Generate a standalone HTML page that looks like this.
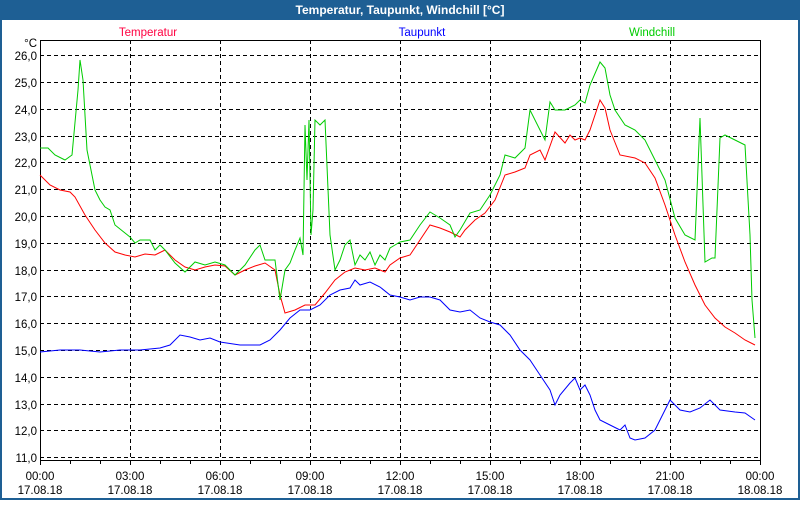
<!DOCTYPE html>
<html><head><meta charset="utf-8"><style>
html,body{margin:0;padding:0;background:#fff;}
body{width:800px;height:500px;overflow:hidden;font-family:"Liberation Sans",sans-serif;}
</style></head><body>
<svg width="800" height="500" xmlns="http://www.w3.org/2000/svg" font-family="Liberation Sans, sans-serif" font-size="11.5">
<rect x="0" y="0" width="800" height="500" fill="#1e5f94"/>
<rect x="2" y="20" width="796" height="478" fill="#fff"/>
<text x="400" y="14" fill="#fff" font-weight="bold" font-size="12" text-anchor="middle">Temperatur, Taupunkt, Windchill [°C]</text>
<text x="148" y="36" fill="#ff0040" text-anchor="middle">Temperatur</text>
<text x="422" y="36" fill="#0000ff" text-anchor="middle">Taupunkt</text>
<text x="652" y="36" fill="#00cc00" text-anchor="middle">Windchill</text>
<g stroke="#000" stroke-dasharray="4,3" stroke-width="1">
<path d="M40 55.5H760M40 82.5H760M40 109.5H760M40 136.5H760M40 162.5H760M40 189.5H760M40 216.5H760M40 243.5H760M40 270.5H760M40 296.5H760M40 323.5H760M40 350.5H760M40 377.5H760M40 404.5H760M40 430.5H760M40 457.5H760"/>
<path d="M130.5 40V460M220.5 40V460M310.5 40V460M400.5 40V460M490.5 40V460M580.5 40V460M670.5 40V460"/>
</g>
<rect x="40.5" y="40.5" width="720" height="420" fill="none" stroke="#000"/>
<path stroke="#000" d="M40.5 461V465M70.5 461V464M100.5 461V464M130.5 461V465M160.5 461V464M190.5 461V464M220.5 461V465M250.5 461V464M280.5 461V464M310.5 461V465M340.5 461V464M370.5 461V464M400.5 461V465M430.5 461V464M460.5 461V464M490.5 461V465M520.5 461V464M550.5 461V464M580.5 461V465M610.5 461V464M640.5 461V464M670.5 461V465M700.5 461V464M730.5 461V464M760.5 461V465"/>
<g text-anchor="end" fill="#000">
<text x="37" y="47">°C</text>
<text x="37" y="60">26,0</text><text x="37" y="87">25,0</text><text x="37" y="114">24,0</text><text x="37" y="141">23,0</text><text x="37" y="167">22,0</text><text x="37" y="194">21,0</text><text x="37" y="221">20,0</text><text x="37" y="248">19,0</text><text x="37" y="275">18,0</text><text x="37" y="301">17,0</text><text x="37" y="328">16,0</text><text x="37" y="355">15,0</text><text x="37" y="382">14,0</text><text x="37" y="409">13,0</text><text x="37" y="435">12,0</text><text x="37" y="462">11,0</text>
</g>
<g text-anchor="middle" fill="#000">
<text x="40" y="480">00:00</text><text x="40" y="494">17.08.18</text>
<text x="130" y="480">03:00</text><text x="130" y="494">17.08.18</text>
<text x="220" y="480">06:00</text><text x="220" y="494">17.08.18</text>
<text x="310" y="480">09:00</text><text x="310" y="494">17.08.18</text>
<text x="400" y="480">12:00</text><text x="400" y="494">17.08.18</text>
<text x="490" y="480">15:00</text><text x="490" y="494">17.08.18</text>
<text x="580" y="480">18:00</text><text x="580" y="494">17.08.18</text>
<text x="670" y="480">21:00</text><text x="670" y="494">17.08.18</text>
<text x="760" y="480">00:00</text><text x="760" y="494">18.08.18</text>
</g>
<g fill="none" stroke-width="1">
<polyline stroke="#0000ff" points="40,352 60,350 80,350 100,352 120,350 140,350 160,348 170,345 180,335 190,337 200,340 210,338 220,342 240,345 260,345 270,340 280,330 290,318 300,310 310,310 320,305 330,295 340,290 350,288 355,280 360,285 370,282 380,287 390,295 400,297 410,300 420,297 430,297 440,300 450,310 460,312 470,310 480,318 490,322 500,325 510,335 520,350 530,360 540,375 550,390 555,405 560,395 570,383 575,378 580,390 585,385 590,395 595,410 600,420 610,425 620,430 625,425 630,438 635,440 645,438 655,430 665,410 670,400 680,410 690,412 700,408 710,400 720,410 735,412 745,413 755,420"/>
<polyline stroke="#ff0000" points="40,175 50,185 60,190 70,192 75,197 85,215 95,230 105,243 115,252 125,255 135,257 145,254 155,255 165,250 175,260 185,267 195,270 205,267 215,265 225,266 235,275 245,270 255,266 265,263 275,270 280,295 285,313 295,310 305,305 315,305 325,293 335,280 345,272 355,268 365,270 375,268 385,272 390,265 400,258 410,255 420,240 430,225 440,228 450,232 460,237 465,230 475,220 485,213 495,200 505,175 515,172 525,168 530,155 540,150 545,160 555,132 565,143 570,135 575,140 580,138 585,140 590,130 600,100 605,108 610,130 620,155 635,158 645,163 655,178 665,205 675,235 685,262 695,285 705,305 715,318 725,327 735,333 745,340 755,345"/>
<polyline stroke="#00cc00" points="40,148 48,148 55,155 65,160 72,155 78,90 80,60 83,80 87,150 95,190 100,200 105,207 110,210 115,225 125,233 130,237 135,243 140,240 150,240 155,250 160,245 165,250 175,263 185,272 195,262 205,265 215,262 225,265 235,275 245,265 255,250 260,245 265,260 275,260 280,300 285,270 290,263 295,250 300,238 303,255 305,125 307,180 309,120 311,235 313,210 315,120 320,125 325,120 330,235 335,270 340,260 345,245 350,240 355,265 360,255 365,260 370,252 375,265 380,255 385,260 390,248 395,245 400,242 410,240 420,225 430,212 440,218 450,225 455,237 460,230 470,213 480,210 490,195 500,175 505,155 515,158 525,148 530,110 540,130 545,140 550,102 555,110 565,110 575,105 580,100 585,103 590,85 600,62 605,68 610,95 615,110 625,125 635,130 645,140 655,160 665,180 675,218 685,235 695,240 700,118 705,262 712,258 715,258 720,138 725,135 745,145 750,235 752,300 755,338"/>
</g>
</svg>
</body></html>
